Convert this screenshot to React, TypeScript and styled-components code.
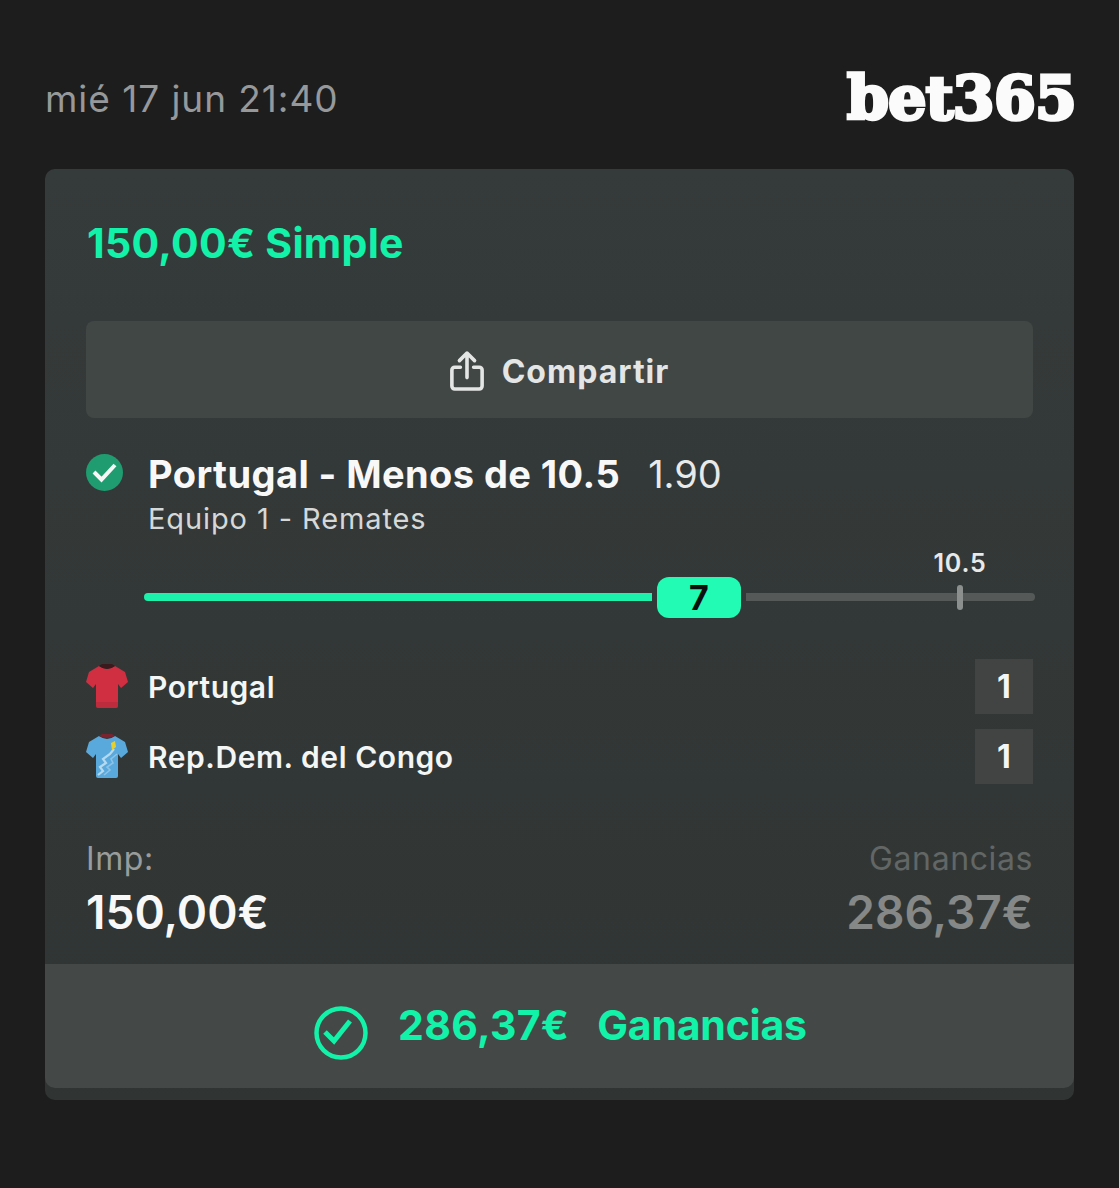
import React from "react";
import styled, { createGlobalStyle } from "styled-components";

const GlobalStyle = createGlobalStyle`
  html, body {
    margin: 0;
    padding: 0;
    background: #1d1d1e;
    font-family: Inter, "Liberation Sans", sans-serif;
  }
`;

const Page = styled.div`
  width: 1119px;
  height: 1188px;
  box-sizing: border-box;
  padding: 70px 45px 0;
  background: #1d1d1e;
`;

const Header = styled.header`
  display: flex;
  align-items: center;
  justify-content: space-between;
  height: 56px;
  margin-bottom: 43px;
`;

const DateText = styled.div`
  font-size: 37px;
  color: #96989a;
  letter-spacing: 0.95px;
`;

const Logo = styled.div`
  font-family: "DejaVu Serif", serif;
  font-weight: 700;
  font-size: 60px;
  line-height: 56px;
  letter-spacing: -0.7px;
  color: #fbfbfb;
  -webkit-text-stroke: 3.5px #fbfbfb;
  margin-right: -2px;
`;

const Card = styled.section`
  background: linear-gradient(180deg, #353b3a 0%, #303534 100%);
  border-radius: 10px;
  padding-bottom: 12px;
`;

const Body = styled.div`
  padding: 49px 41px 0;
`;

const Title = styled.div`
  font-size: 41px;
  line-height: 50px;
  font-weight: 700;
  letter-spacing: 0.3px;
  color: #12f2a8;
  margin-left: 1px;
  margin-bottom: 53px;
`;

const ShareButton = styled.div`
  height: 97px;
  box-sizing: border-box;
  padding-top: 3px;
  border-radius: 8px;
  background: #414745;
  display: flex;
  align-items: center;
  justify-content: center;
  gap: 18px;
  color: #e4e6e5;
  font-size: 32px;
  font-weight: 700;
  letter-spacing: 1px;
`;

const Selection = styled.div`
  display: flex;
  gap: 25px;
  margin-top: 33px;
`;

const CheckBadge = styled.div`
  width: 37px;
  height: 37px;
  margin-top: 3px;
  flex: none;
`;

const SelectionText = styled.div`
  display: flex;
  flex-direction: column;
`;

const SelectionTitle = styled.div`
  display: flex;
  align-items: baseline;
  gap: 28px;
  font-size: 38px;
  line-height: 46px;
  font-weight: 700;
  letter-spacing: 0.42px;
  color: #f8f8f8;
`;

const Odds = styled.span`
  font-weight: 400;
  letter-spacing: 0;
  color: #e8e9e9;
`;

const Market = styled.div`
  font-size: 29px;
  line-height: 36px;
  margin-top: 4px;
  color: #d6d8d7;
  letter-spacing: 0.9px;
`;

const SliderRow = styled.div`
  position: relative;
  height: 50px;
  margin: 35px -2px 0 58px;
  display: flex;
  align-items: center;
`;

const SliderFill = styled.div`
  width: 508px;
  height: 8px;
  border-radius: 4px 0 0 4px;
  background: #1cf2ac;
`;

const SliderThumb = styled.div`
  width: 84px;
  height: 41px;
  margin-left: 5px;
  border-radius: 12px;
  background: #21fbb3;
  color: #0b0f0e;
  font-size: 34px;
  font-weight: 700;
  display: flex;
  align-items: center;
  justify-content: center;
`;

const SliderRest = styled.div`
  flex: 1;
  height: 8px;
  margin-left: 5px;
  border-radius: 0 4px 4px 0;
  background: #555a59;
`;

const LineMark = styled.div`
  position: absolute;
  left: 813px;
  top: 13px;
  width: 6px;
  height: 25px;
  border-radius: 3px;
  background: #8b8f8e;
`;

const LineLabel = styled.div`
  position: absolute;
  left: 776px;
  top: -24px;
  width: 80px;
  text-align: center;
  font-size: 25px;
  line-height: 30px;
  font-weight: 600;
  letter-spacing: 0.8px;
  color: #e8e9e9;
`;

const Teams = styled.div`
  display: flex;
  flex-direction: column;
  gap: 15px;
  margin-top: 37px;
`;

const TeamRow = styled.div`
  display: flex;
  align-items: center;
  height: 55px;
`;

const Shirt = styled.svg`
  width: 42px;
  height: 46px;
  flex: none;
  margin-right: 20px;
`;

const TeamName = styled.div`
  flex: 1;
  font-size: 30px;
  font-weight: 600;
  color: #f4f5f5;
  letter-spacing: 0.55px;
`;

const Score = styled.div`
  width: 58px;
  height: 55px;
  background: #414443;
  display: flex;
  align-items: center;
  justify-content: center;
  font-size: 32px;
  font-weight: 700;
  color: #f4f5f5;
`;

const Totals = styled.div`
  display: flex;
  justify-content: space-between;
  margin-top: 55px;
  height: 125px;
`;

const TotalColumn = styled.div<{ $right?: boolean }>`
  display: flex;
  flex-direction: column;
  align-items: ${(p) => (p.$right ? "flex-end" : "flex-start")};
`;

const TotalLabel = styled.div<{ $muted?: boolean }>`
  font-size: 32px;
  line-height: 40px;
  color: ${(p) => (p.$muted ? "#626665" : "#999c9b")};
  letter-spacing: 0.6px;
`;

const TotalValue = styled.div<{ $muted?: boolean }>`
  font-size: 46px;
  line-height: 58px;
  margin-top: 4px;
  font-weight: 600;
  color: ${(p) => (p.$muted ? "#858887" : "#f8f8f8")};
`;

const Footer = styled.div`
  height: 124px;
  padding: 0 0 2px 2px;
  box-sizing: border-box;
  border-radius: 0 0 10px 10px;
  background: #444846;
  display: flex;
  align-items: center;
  justify-content: center;
  color: #12f2a8;
  font-size: 41px;
  font-weight: 700;
`;

const FooterIcon = styled.svg`
  width: 54px;
  height: 54px;
  margin: 16px 30px 0 0;
  flex: none;
`;

const FooterAmount = styled.span`
  letter-spacing: 0.3px;
`;

const FooterLabel = styled.span`
  margin-left: 28px;
  letter-spacing: -0.2px;
`;

const SHIRT = "M13 2L3 8 0 18l7 6 3-4v22q0 2 2 2h18q2 0 2-2V20l3 4 7-6-3-10-10-6q-8 6-16 0z";

const App = () => (
  <Page>
    <GlobalStyle />
    <Header>
      <DateText>mié 17 jun 21:40</DateText>
      <Logo>bet365</Logo>
    </Header>
    <Card>
      <Body>
        <Title>150,00€ Simple</Title>
        <ShareButton>
          <svg width="34" height="42" viewBox="0 0 36 42" fill="none" stroke="#e4e6e5" strokeWidth="3.8" strokeLinecap="round" strokeLinejoin="round">
            <path d="M11 17H5a3 3 0 0 0-3 3v17a3 3 0 0 0 3 3h26a3 3 0 0 0 3-3V20a3 3 0 0 0-3-3h-6" />
            <path d="M18 28V3M10 10l8-8 8 8" />
          </svg>
          Compartir
        </ShareButton>
        <Selection>
          <CheckBadge>
            <svg width="37" height="37" viewBox="0 0 37 37">
              <circle cx="18.5" cy="18.5" r="18.5" fill="#1f9c70" />
              <path d="M8 18l7.5 7.5L29 11" fill="none" stroke="#f4f8f6" strokeWidth="4" />
            </svg>
          </CheckBadge>
          <SelectionText>
            <SelectionTitle>
              Portugal - Menos de 10.5
              <Odds>1.90</Odds>
            </SelectionTitle>
            <Market>Equipo 1 - Remates</Market>
          </SelectionText>
        </Selection>
        <SliderRow>
          <SliderFill />
          <SliderThumb>7</SliderThumb>
          <SliderRest />
          <LineMark />
          <LineLabel>10.5</LineLabel>
        </SliderRow>
        <Teams>
          <TeamRow>
            <Shirt viewBox="0 0 42 46">
              <path d={SHIRT} fill="#cf2f41" />
              <path d="M13 2q8 6 16 0l-3-2H16z" fill="#3a1a1c" />
              <path d="M10 38v4q0 2 2 2h18q2 0 2-2v-4z" fill="#a92a38" opacity="0.5" />
            </Shirt>
            <TeamName>Portugal</TeamName>
            <Score>1</Score>
          </TeamRow>
          <TeamRow>
            <Shirt viewBox="0 0 42 46">
              <path d={SHIRT} fill="#5aa9dc" />
              <path d="M13 2q8 4 16 0l-3-2H16z" fill="#7a2430" />
              <path d="M12 41l5-4-3-4 6-4-3-4 7-5 4-5" fill="none" stroke="#b4daf0" strokeWidth="2.2" />
              <path d="M18 41l6-5-3-3 6-4-2-4 6-5" fill="none" stroke="#8cc3e6" strokeWidth="1.6" />
              <path d="M25 9l4-2 1 6-4 3z" fill="#e8d02c" />
            </Shirt>
            <TeamName>Rep.Dem. del Congo</TeamName>
            <Score>1</Score>
          </TeamRow>
        </Teams>
        <Totals>
          <TotalColumn>
            <TotalLabel>Imp:</TotalLabel>
            <TotalValue>150,00€</TotalValue>
          </TotalColumn>
          <TotalColumn $right>
            <TotalLabel $muted>Ganancias</TotalLabel>
            <TotalValue $muted>286,37€</TotalValue>
          </TotalColumn>
        </Totals>
      </Body>
      <Footer>
        <FooterIcon viewBox="0 0 54 54" fill="none" stroke="#12f2a8">
          <circle cx="27" cy="27" r="24.5" strokeWidth="4.5" />
          <path d="M11 26l9 9 16-20" strokeWidth="5" />
        </FooterIcon>
        <FooterAmount>286,37€</FooterAmount>
        <FooterLabel>Ganancias</FooterLabel>
      </Footer>
    </Card>
  </Page>
);

export default App;
